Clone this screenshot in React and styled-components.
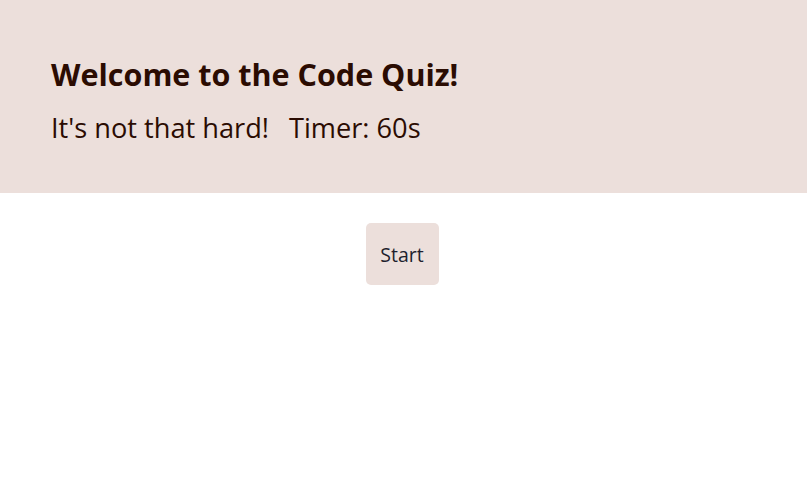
import styled, { createGlobalStyle } from 'styled-components';

const GlobalStyle = createGlobalStyle`
  body {
    margin: 0;
    background: #ffffff;
    font-family: 'Open Sans', 'Noto Sans', sans-serif;
  }
`;

const Header = styled.header`
  background: #ecdfdb;
  height: 193px;
  box-sizing: border-box;
  padding: 52px 51px 0;
  color: #2b0c02;
`;

const Title = styled.h1`
  margin: 0;
  font-size: 30.5px;
  font-weight: 700;
  line-height: 44px;
`;

const SubRow = styled.div`
  display: flex;
  gap: 20px;
  margin-top: 14px;
  font-size: 27.2px;
  line-height: 36px;
`;

const Main = styled.main`
  display: flex;
  justify-content: center;
  padding-top: 30px;
`;

const StartButton = styled.button`
  width: 73px;
  height: 62px;
  margin-left: -3px;
  border: none;
  border-radius: 5px;
  background: #ecdfdb;
  color: #1f1f2e;
  font-family: inherit;
  font-size: 19.5px;
  padding: 0;
  cursor: pointer;
`;

export default function App() {
  return (
    <>
      <GlobalStyle />
      <Header>
        <Title>Welcome to the Code Quiz!</Title>
        <SubRow>
          <span>It's not that hard!</span>
          <span>Timer: 60s</span>
        </SubRow>
      </Header>
      <Main>
        <StartButton>Start</StartButton>
      </Main>
    </>
  );
}
